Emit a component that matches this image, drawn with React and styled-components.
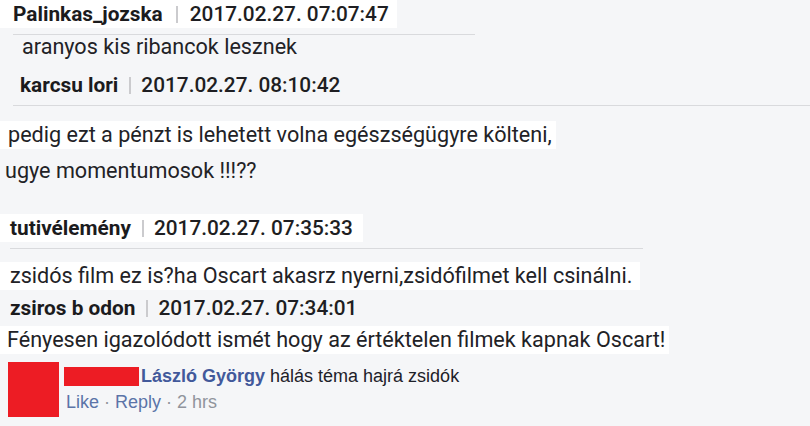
import React from "react";
import styled, { createGlobalStyle } from "styled-components";

const Global = createGlobalStyle`
  html, body, #root { height: 100%; }
  body {
    margin: 0;
    background: #f5f6f8;
    font-family: Roboto, "Liberation Sans", sans-serif;
    color: #1e1e22;
    overflow: hidden;
  }
`;

const Page = styled.div`
  width: 810px;
  height: 426px;
  background: #f5f6f8;
  display: flex;
  flex-direction: column;
`;

const Row = styled.div`
  box-sizing: border-box;
  width: fit-content;
  height: ${(p) => p.$h || 28}px;
  line-height: ${(p) => p.$h || 28}px;
  font-size: ${(p) => p.$size || 20.8}px;
  margin-top: ${(p) => p.$mt || 0}px;
  padding-left: ${(p) => p.$pl || 0}px;
  padding-right: ${(p) => p.$pr || 4}px;
  background: ${(p) => (p.$paper ? "#ffffff" : "transparent")};
  white-space: nowrap;
  display: flex;
  align-items: center;
`;

const Name = styled.span`
  font-weight: 700;
  color: #1b1b1d;
`;

const Sep = styled.span`
  display: inline-block;
  width: 2px;
  height: 17px;
  background: #cbcbce;
  margin: 0 ${(p) => p.$r || 10}px 0 ${(p) => p.$l || 11}px;
`;

const Stamp = styled.span`
  font-weight: 500;
  color: #1e1e22;
`;

const Divider = styled.div`
  height: 1px;
  background: #d9dadd;
  margin-top: ${(p) => p.$mt || 6}px;
  margin-left: ${(p) => p.$ml || 13}px;
  width: ${(p) => p.$w}px;
`;

const Plain = styled.span`
  font-weight: 400;
  color: #222226;
`;

const FbComment = styled.div`
  display: flex;
  margin-top: ${(p) => p.$mt || 0}px;
  padding-left: 8px;
  gap: 5px;
  font-family: "Liberation Sans", Arial, sans-serif;
  font-size: 18px;
`;

const Avatar = styled.div`
  width: 51px;
  height: 55px;
  background: #ed1c24;
  flex: none;
`;

const FbBody = styled.div`
  display: flex;
  flex-direction: column;
  padding-top: 3px;
`;

const FbLine = styled.div`
  height: 22px;
  line-height: 22px;
  display: flex;
  align-items: center;
  white-space: nowrap;
  margin-top: ${(p) => p.$mt || 0}px;
  padding-left: ${(p) => p.$pl || 0}px;
`;

const Redact = styled.span`
  display: inline-block;
  width: 75px;
  height: 19px;
  background: #ed1c24;
  margin-right: 2px;
`;

const FbName = styled.span`
  font-weight: 700;
  color: #42599b;
`;

const FbText = styled.span`
  color: #1d2129;
  margin-left: 5px;
`;

const FbLink = styled.span`
  color: #5b74a8;
`;

const FbMeta = styled.span`
  color: #90949c;
`;

const TEXT = 21.6;

export default function App() {
  return (
    <>
      <Global />
      <Page>
        <Row $pl={13} $paper $pr={8}>
          <Name>Palinkas_jozska</Name>
          <Sep $l={13} $r={12} />
          <Stamp>2017.02.27. 07:07:47</Stamp>
        </Row>
        <Divider $mt={6} $ml={13} $w={462} />
        <Row $pl={22} $h={24} $size={TEXT}>
          <Plain>aranyos kis ribancok lesznek</Plain>
        </Row>
        <Row $pl={20} $mt={12}>
          <Name>karcsu lori</Name>
          <Sep />
          <Stamp>2017.02.27. 08:10:42</Stamp>
        </Row>
        <Divider $mt={6} $ml={13} $w={797} />
        <Row $pl={8} $mt={15} $paper $size={TEXT}>
          <Plain>pedig ezt a pénzt is lehetett volna egészségügyre költeni,</Plain>
        </Row>
        <Row $pl={5} $mt={8} $size={TEXT}>
          <Plain>ugye momentumosok !!!??</Plain>
        </Row>
        <Row $pl={10} $mt={29} $paper $pr={10}>
          <Name>tutivélemény</Name>
          <Sep />
          <Stamp>2017.02.27. 07:35:33</Stamp>
        </Row>
        <Divider $mt={6} $ml={10} $w={633} />
        <Row $pl={10} $mt={13} $paper $pr={8} $size={TEXT}>
          <Plain>zsidós film ez is?ha Oscart akasrz nyerni,zsidófilmet kell csinálni.</Plain>
        </Row>
        <Row $pl={10} $mt={4}>
          <Name>zsiros b odon</Name>
          <Sep />
          <Stamp>2017.02.27. 07:34:01</Stamp>
        </Row>
        <Row $pl={7} $mt={4} $paper $size={TEXT}>
          <Plain>Fényesen igazolódott ismét hogy az értéktelen filmek kapnak Oscart!</Plain>
        </Row>
        <FbComment $mt={8}>
          <Avatar />
          <FbBody>
            <FbLine>
              <Redact />
              <FbName>László György</FbName>
              <FbText>hálás téma hajrá zsidók</FbText>
            </FbLine>
            <FbLine $mt={4} $pl={2}>
              <FbLink>Like</FbLink>
              <FbMeta>&nbsp;·&nbsp;</FbMeta>
              <FbLink>Reply</FbLink>
              <FbMeta>&nbsp;·&nbsp;2 hrs</FbMeta>
            </FbLine>
          </FbBody>
        </FbComment>
      </Page>
    </>
  );
}
